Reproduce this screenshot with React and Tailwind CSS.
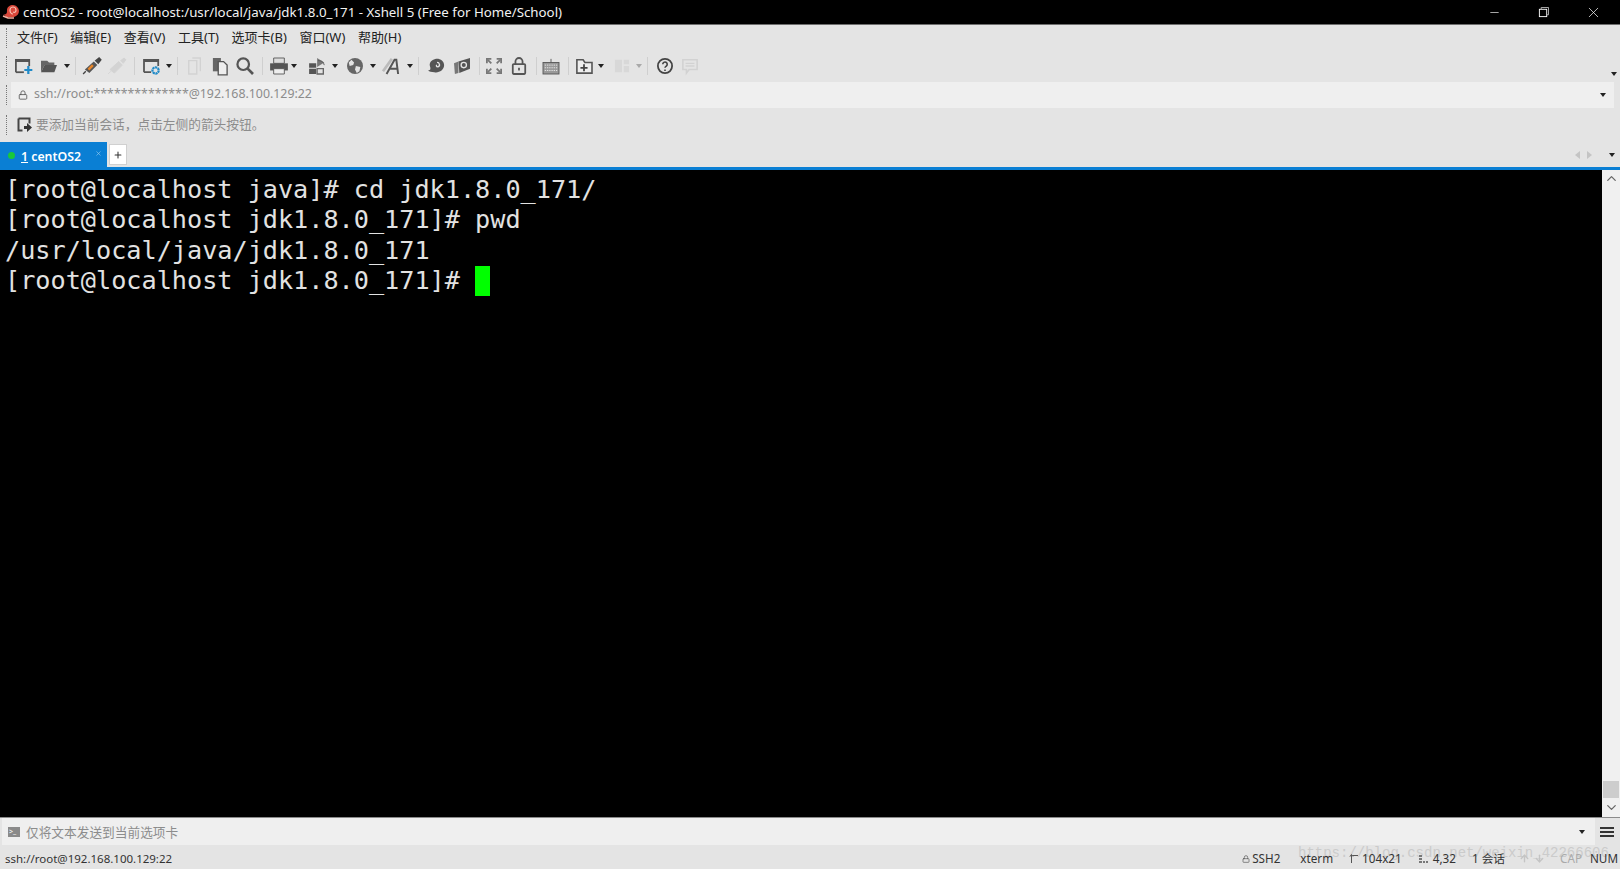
import { ChevronUp, ChevronDown, X, Minus, Plus, Lock, ArrowUp, ArrowDown } from 'lucide-react';

const UI_FONT = 'font-["Noto_Sans","Noto_Sans_CJK_SC",sans-serif]';

const MENU = ['文件(F)', '编辑(E)', '查看(V)', '工具(T)', '选项卡(B)', '窗口(W)', '帮助(H)'];

const LINES = [
  '[root@localhost java]# cd jdk1.8.0_171/',
  '[root@localhost jdk1.8.0_171]# pwd',
  '/usr/local/java/jdk1.8.0_171',
];

function Caret({ className = '' }) {
  return <span className={`w-0 h-0 border-x-[3.5px] border-x-transparent border-t-[4px] border-t-[#222] ${className}`} />;
}

function Sep() {
  return <span className="w-px h-[18px] bg-[#cfcfcf] mx-[3.5px]" />;
}

function Grip() {
  return <span className="w-px h-[20px] border-l border-dotted border-[#777] ml-[6px]" />;
}

function Ico({ children, className = '' }) {
  return (
    <svg width="24" height="24" viewBox="-1.500 -1.500 27 27" className={`shrink-0 ${className}`}>
      {children}
    </svg>
  );
}

export default function App() {
  return (
    <div className={`w-[1620px] h-[869px] flex flex-col overflow-hidden bg-[#e4e4e4] ${UI_FONT}`}>
      {/* title bar */}
      <div className="h-[25px] shrink-0 bg-black border-b border-[#6e6e6e] flex items-center text-white">
        <svg width="18" height="16" viewBox="0 0 18 16" className="ml-[2px] shrink-0">
          <path d="M1 11c2 0 3 1 3 2h8c3-1 5-3 5-6 0-3-3-6-6-6S5 3 5 6c0 2 0 3-1 4z" fill="#d8473a" />
          <path d="M11 10c-2 0-3-2-3-4s2-3 3-3 3 1 3 3-1 3-3 2" fill="none" stroke="#f6c1b4" strokeWidth="1.200" />
          <path d="M1 12l5 2h6" stroke="#f3b0a0" strokeWidth="1.500" fill="none" />
        </svg>
        <span className="ml-[3px] pt-[2px] text-[13.3px] leading-none text-[#f2f2f2] whitespace-nowrap">
          centOS2 - root@localhost:/usr/local/java/jdk1.8.0_171 - Xshell 5 (Free for Home/School)
        </span>
        <div className="ml-auto pr-[2px] flex items-center">
          <span className="w-[49.500px] flex justify-center"><Minus size={13} strokeWidth={1.2} /></span>
          <span className="w-[49.500px] flex justify-center">
            <svg width="11" height="11" viewBox="0 0 12 12" fill="none" stroke="#fff">
              <rect x="1.500" y="2.500" width="8" height="8" />
              <path d="M3.500 2.500v-2h8v8h-2" stroke="#bbb" />
            </svg>
          </span>
          <span className="w-[49.500px] flex justify-center"><X size={17} strokeWidth={1} /></span>
        </div>
      </div>

      {/* menu */}
      <div className="h-[26px] shrink-0 flex items-center">
        <Grip />
        <div className="ml-[10px] flex gap-[12.600px] text-[13px] text-[#222] whitespace-nowrap">
          {MENU.map((m) => <span key={m}>{m}</span>)}
        </div>
      </div>

      {/* toolbar */}
      <div className="h-[30px] shrink-0 flex items-center relative">
        <Grip />
        <div className="ml-[4px] flex items-center gap-[1px]">
          <Ico>
            <path d="M4 19V5h15v7" fill="none" stroke="#555" strokeWidth="2" />
            <path d="M4 6h15" stroke="#555" strokeWidth="3" />
            <path d="M4 19h9" stroke="#555" strokeWidth="2" />
            <path d="M18 12v9M13.500 16.500h9" stroke="#1f8ac8" strokeWidth="2.500" />
          </Ico>
          <Ico className="ml-[1px]">
            <path d="M3 6h7l2 2h6v3H7l-4 8z" fill="#666" />
            <path d="M3 19h15l3-8H7z" fill="#555" />
          </Ico>
          <Caret className="ml-[2px]" />
          <Sep />
          <Ico>
            <path d="M4 16L14 7l4 4-9 9z" fill="#555" />
            <path d="M7 15l5-5 2 2-5 5z" fill="#e8862a" />
            <path d="M16 6l4-3 2 2-3 4zM2 21l3-3" stroke="#444" strokeWidth="1.500" fill="#444" />
          </Ico>
          <Ico>
            <path d="M4 16L14 7l4 4-9 9zM16 6l4-3 2 2-3 4zM2 21l3-3" fill="#d3d3d3" stroke="#d3d3d3" />
          </Ico>
          <Sep />
          <Ico className="ml-[1px]">
            <path d="M3 19V5h16v7M3 19h8" fill="none" stroke="#555" strokeWidth="2" />
            <path d="M3 6h16" stroke="#555" strokeWidth="3" />
            <circle cx="16" cy="17" r="3.500" fill="none" stroke="#1f8ac8" strokeWidth="2.500" strokeDasharray="2.500 0.600" />
          </Ico>
          <Caret className="ml-[1px]" />
          <Sep />
          <Ico className="ml-[1px]">
            <path d="M5 6h9v15H5z" fill="none" stroke="#d2d2d2" strokeWidth="1.500" />
            <path d="M9 3h9v15" fill="none" stroke="#d2d2d2" strokeWidth="1.500" />
          </Ico>
          <Ico>
            <path d="M4 3h9v15H4z" fill="#666" />
            <path d="M10 7h6l4 4v11H10z" fill="#eee" stroke="#555" strokeWidth="1.500" />
          </Ico>
          <Ico>
            <circle cx="10" cy="10" r="6.500" fill="none" stroke="#555" strokeWidth="2.500" />
            <path d="M15 15l6 6" stroke="#555" strokeWidth="3" />
          </Ico>
          <Sep />
          <Ico>
            <path d="M6 3h12v6H6z" fill="#ddd" stroke="#555" />
            <path d="M2 9h20v8H2z" fill="#555" />
            <path d="M6 15h12v6H6z" fill="#eee" stroke="#555" />
          </Ico>
          <Caret className="-ml-[1px]" />
          <Ico className="ml-[8px]">
            <path d="M2 9h8v5H2zM2 15h8v6H2z" fill="#555" />
            <path d="M11 15h7v6h-7z" fill="none" stroke="#666" strokeWidth="1.500" />
            <path d="M11 3l8 5-8 5z" fill="#777" />
            <path d="M12 6c4 0 6 1 7 5" fill="none" stroke="#555" />
          </Ico>
          <Caret className="ml-[1px]" />
          <Ico className="ml-[4px]">
            <circle cx="12" cy="12" r="9" fill="#666" />
            <path d="M8 5l3 3-1 3-4 1-1-4zM13 12l5 1-1 5-3 2-2-4z" fill="#e4e4e4" />
          </Ico>
          <Caret className="ml-[2px]" />
          <Ico className="ml-[2px]">
            <path d="M3 18L13 4" stroke="#bbb" strokeWidth="3" />
            <path d="M7 21L16 5h2l2 16M10 15h9" fill="none" stroke="#555" strokeWidth="2.200" />
          </Ico>
          <Caret className="ml-[3px]" />
          <Sep />
          <Ico className="ml-[2px]">
            <path d="M10 4c5-1 10 2 10 7 0 6-6 9-11 8-3 0-6-1-7-2 3 0 3-2 2-5-1-4 2-7 6-8z" fill="#555" />
            <path d="M12 8c3 0 4 4 1 5-2 0-2-2-1-2" fill="none" stroke="#e4e4e4" strokeWidth="1.500" />
          </Ico>
          <Ico>
            <path d="M8 7l13-4v12L9 20z" fill="#555" />
            <path d="M3 9l5-2v13l-4 1z" fill="#777" />
            <circle cx="14" cy="11" r="3" fill="none" stroke="#e4e4e4" strokeWidth="1.500" />
          </Ico>
          <Sep />
          <Ico className="-ml-[2px]">
            <path d="M4 9V4h5M15 4h5v5M4 15v5h5M20 15v5h-5" fill="none" stroke="#777" strokeWidth="2" />
            <path d="M5 5l4 4M19 5l-4 4M5 19l4-4M19 19l-4-4" stroke="#777" strokeWidth="2" />
          </Ico>
          <Ico>
            <rect x="5" y="10" width="14" height="11" rx="1" fill="none" stroke="#555" strokeWidth="2" />
            <path d="M8 10V7a4 4 0 018 0v3" fill="none" stroke="#555" strokeWidth="2" />
            <rect x="11" y="14" width="2" height="3" fill="#555" />
          </Ico>
          <Sep />
          <Ico className="-ml-[2px]">
            <rect x="3" y="8" width="18" height="13" fill="#999" stroke="#555" />
            <path d="M5 11h14M5 14h14M5 17h14" stroke="#eee" strokeDasharray="1.500 1" />
            <path d="M12 8V4" stroke="#555" />
          </Ico>
          <Sep />
          <Ico className="-ml-[1px]">
            <path d="M4 5h7l2 3h8v12H4z" fill="#eee" stroke="#555" strokeWidth="1.800" />
            <path d="M12 10v8M8 14h8" stroke="#444" strokeWidth="2" />
          </Ico>
          <Caret className="ml-[1px]" />
          <Ico className="ml-[5px]">
            <path d="M4 5h8v14H4zM14 5h6v5h-6zM14 12h6v7h-6z" fill="#d8d8d8" />
          </Ico>
          <Caret className="ml-[1px] opacity-30" />
          <Sep />
          <Ico className="ml-[1px]">
            <circle cx="12" cy="12" r="8" fill="none" stroke="#444" strokeWidth="2" />
            <path d="M9.500 10a2.500 2.500 0 114 2c-1 .7-1.500 1-1.500 2M12 16v1.500" fill="none" stroke="#444" strokeWidth="1.800" />
          </Ico>
          <Ico>
            <path d="M4 5h16v11h-9l-3 4v-4H4z" fill="none" stroke="#d2d2d2" strokeWidth="1.800" />
            <path d="M7 9h10M7 12h10" stroke="#d2d2d2" strokeWidth="1.500" />
          </Ico>
        </div>
        <Caret className="absolute right-[3px] top-[21px]" />
      </div>

      {/* address bar */}
      <div className="h-[26px] shrink-0 flex items-center pt-[1px]">
        <Grip />
        <div className="ml-[4px] w-[1603px] h-[26px] bg-[#efefef] flex items-center pl-[7px] pr-[8px] text-[12.350px] text-[#8c8c8c]">
          <Lock size={10} strokeWidth={2} className="text-[#555]" />
          <span className="ml-[6px]">ssh://root:**************@192.168.100.129:22</span>
          <Caret className="ml-auto" />
        </div>
      </div>

      {/* session hint */}
      <div className="h-[35px] shrink-0 flex items-center">
        <Grip />
        <svg width="16" height="16" viewBox="0 0 16 16" className="ml-[10px] shrink-0">
          <path d="M1.500 1.500h11v5M1.500 1.500v12h4" fill="none" stroke="#444" strokeWidth="2" />
          <path d="M7 9h3V6l5 4.500-5 4.500v-3H7z" fill="#333" />
        </svg>
        <span className="ml-[3px] text-[12.700px] text-[#8c8c8c]">要添加当前会话，点击左侧的箭头按钮。</span>
      </div>

      {/* tabs */}
      <div className="h-[25px] shrink-0 flex items-end relative">
        <div className="w-[107px] h-[25px] bg-[#0a7fd4] flex items-center pt-[5px] text-white text-[12.300px] font-semibold">
          <span className="ml-[8px] -mt-[3px] w-[7px] h-[7px] rounded-full bg-[#19c93a]" />
          <span className="ml-[6px]"><span className="underline">1</span> centOS2</span>
          <X size={7} className="ml-[14px] -mt-[7px] text-[#9fd0f2]" />
        </div>
        <div className="ml-[2px] w-[18px] h-[21px] bg-white border border-[#d0d0d0] flex items-center justify-center self-center">
          <Plus size={10} strokeWidth={2.5} className="text-[#333]" />
        </div>
        <div className="ml-auto self-center flex items-center gap-[7px] pr-[5px]">
          <span className="w-0 h-0 border-y-[4px] border-y-transparent border-r-[5px] border-r-[#c4c4c4]" />
          <span className="w-0 h-0 border-y-[4px] border-y-transparent border-l-[5px] border-l-[#c4c4c4]" />
          <Caret className="ml-[10px]" />
        </div>
      </div>
      <div className="h-[3px] shrink-0 bg-[#0a7fd4]" />

      {/* terminal */}
      <div className="flex-1 min-h-0 flex bg-black">
        <div className='flex-1 pt-[5px] pl-[5px] font-["DejaVu_Sans_Mono",monospace] text-[25.200px] leading-[30.400px] text-[#e2e2e2] whitespace-pre'>
          {LINES.map((l) => <div key={l}>{l}</div>)}
          <div className="flex items-center h-[30.400px]">
            <span>{'[root@localhost jdk1.8.0_171]# '}</span>
            <span className="w-[15.200px] h-[30px] bg-[#00ff00]" />
          </div>
        </div>
        <div className="w-[18px] shrink-0 bg-[#f0f0f0] flex flex-col items-center">
          <ChevronUp size={15} strokeWidth={2} className="text-[#666] mt-[1px]" />
          <div className="mt-auto w-[16px] h-[17px] bg-[#cdcdcd]" />
          <ChevronDown size={15} strokeWidth={2} className="text-[#666] my-[2px]" />
        </div>
      </div>

      {/* send bar */}
      <div className="h-[28px] shrink-0 border-t border-[#8a8a8a] flex items-center bg-[#e4e4e4]">
        <div className="flex-1 h-[27px] ml-[2px] bg-[#efefef] flex items-center pl-[6px] pr-[10px]">
          <span className="w-[12px] h-[10px] bg-[#8a8a8a] flex items-center pl-[1px] text-[7px] leading-none text-white">&gt;_</span>
          <span className="ml-[6px] pt-[2px] text-[12.700px] text-[#8c8c8c]">仅将文本发送到当前选项卡</span>
          <Caret className="ml-auto" />
        </div>
        <div className="w-[25px] pr-[2px] flex flex-col items-center gap-[2px]">
          <span className="w-[14px] h-[2px] bg-[#333]" />
          <span className="w-[14px] h-[2px] bg-[#333]" />
          <span className="w-[14px] h-[2px] bg-[#333]" />
        </div>
      </div>

      {/* status bar */}
      <div className="h-[24px] shrink-0 flex items-center pt-[4px] text-[11.700px] text-[#333] relative whitespace-nowrap">
        <span className='absolute left-[1298px] -top-[2px] font-["Liberation_Mono",monospace] text-[14px] text-[#cbcbcb] pointer-events-none'>
          https://blog.csdn.net/weixin_42266606
        </span>
        <span className="ml-[5px] text-[11.500px] relative">ssh://root@192.168.100.129:22</span>
        <div className="ml-auto flex items-center relative">
          <Lock size={8} className="text-[#555] mr-[2px]" />
          <span>SSH2</span>
          <span className="ml-[20px]">xterm</span>
          <svg width="9" height="9" viewBox="0 0 9 9" className="ml-[16px]" fill="none" stroke="#555">
            <path d="M2.500 9V1M1 2.500l1.500-2 1.500 2M3.500 1.500H9" />
          </svg>
          <span className="ml-[4px]">104x21</span>
          <svg width="9" height="9" viewBox="0 0 9 9" className="ml-[17px]" fill="#777">
            <path d="M0 1h3v2H0zM0 4h3v2H0zM0 7h3v2H0zM4 7h2v2H4zM7 7h2v2H7z" />
          </svg>
          <span className="ml-[5px]">4,32</span>
          <span className="ml-[16px]">1 会话</span>
          <ArrowUp size={11} strokeWidth={3} className="ml-[14px] text-[#c4c4c4]" />
          <ArrowDown size={11} strokeWidth={3} className="ml-[4px] text-[#c4c4c4]" />
          <span className="ml-[15px] text-[#aaa]">CAP</span>
          <span className="ml-[8px] mr-[2px]">NUM</span>
        </div>
      </div>
    </div>
  );
}
